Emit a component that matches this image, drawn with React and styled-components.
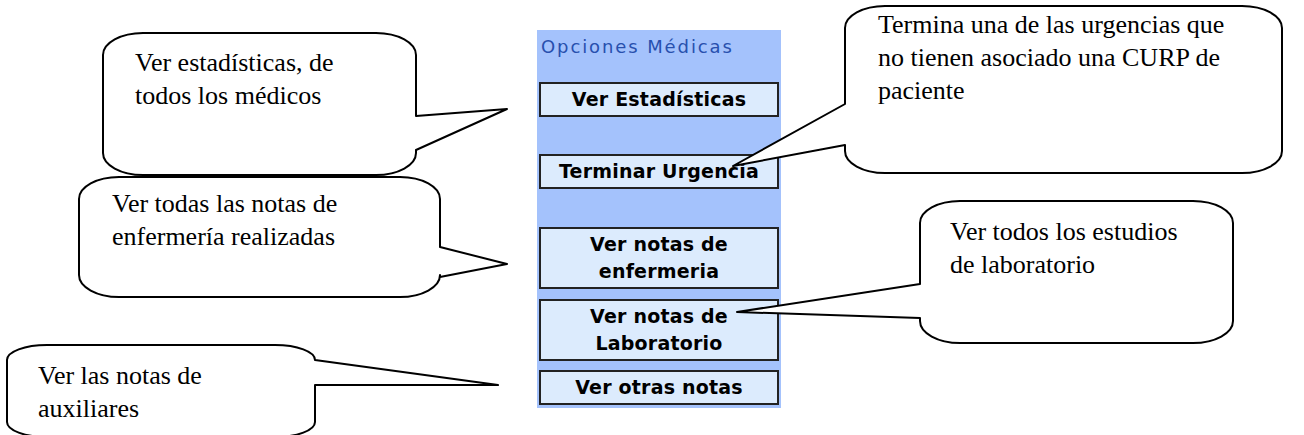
import React from 'react';
import styled, { createGlobalStyle } from 'styled-components';

const GlobalStyle = createGlobalStyle`
  html, body {
    margin: 0;
    padding: 0;
    background: #ffffff;
  }
`;

// Word-style rounded callout with a wedge tail on the left or right side
const calloutPath = ({ w, h, rx, ry, tail }) => {
  const { side, a, b, px, py } = tail;
  const arc = (x, y) => `A ${rx} ${ry} 0 0 1 ${x} ${y}`;
  if (side === 'right') {
    return [
      `M ${rx} 0`, `H ${w - rx}`, arc(w, ry),
      `V ${a}`, `L ${px} ${py}`, `L ${w} ${b}`,
      `V ${h - ry}`, arc(w - rx, h),
      `H ${rx}`, arc(0, h - ry),
      `V ${ry}`, arc(rx, 0), 'Z',
    ].join(' ');
  }
  return [
    `M ${rx} 0`, `H ${w - rx}`, arc(w, ry),
    `V ${h - ry}`, arc(w - rx, h),
    `H ${rx}`, arc(0, h - ry),
    `V ${b}`, `L ${px} ${py}`, `L 0 ${a}`,
    `V ${ry}`, arc(rx, 0), 'Z',
  ].join(' ');
};

const Callout = ({ x, y, w, h, rx = 40, ry = 22, tail, textX, textY, lines }) => (
  <Bubble $x={x} $y={y} $w={w} $h={h}>
    <BubbleShape width={w} height={h}>
      <path
        d={calloutPath({ w, h, rx, ry, tail })}
        fill="#ffffff"
        stroke="#000000"
        strokeWidth="2"
        strokeLinejoin="round"
      />
    </BubbleShape>
    <BubbleText $pl={textX - x} $pt={textY - y}>
      {lines.map((l) => (
        <div key={l}>{l}</div>
      ))}
    </BubbleText>
  </Bubble>
);

const buttons = [
  { label: ['Ver Estadísticas'], gap: 0 },
  { label: ['Terminar Urgencia'], gap: 37 },
  { label: ['Ver notas de', 'enfermeria'], gap: 38 },
  { label: ['Ver notas de', 'Laboratorio'], gap: 10 },
  { label: ['Ver otras notas'], gap: 9 },
];

const callouts = [
  {
    x: 103, y: 33, w: 313, h: 142,
    tail: { side: 'right', a: 83, b: 117, px: 404, py: 76 },
    textX: 135, textY: 46,
    lines: ['Ver estadísticas, de', 'todos los médicos'],
  },
  {
    x: 79, y: 177, w: 361, h: 120,
    tail: { side: 'right', a: 70, b: 100, px: 428, py: 87 },
    textX: 112, textY: 187,
    lines: ['Ver todas las notas de', 'enfermería realizadas'],
  },
  {
    x: 7, y: 345, w: 308, h: 92, ry: 15,
    tail: { side: 'right', a: 15, b: 40, px: 491, py: 40 },
    textX: 38, textY: 359,
    lines: ['Ver las notas de', 'auxiliares'],
  },
  {
    x: 845, y: 6, w: 437, h: 167,
    tail: { side: 'left', a: 98, b: 139, px: -112, py: 160 },
    textX: 878, textY: 8,
    lines: ['Termina una de las urgencias que', 'no tienen asociado una CURP de', 'paciente'],
  },
  {
    x: 920, y: 201, w: 313, h: 142,
    tail: { side: 'left', a: 83, b: 117, px: -183, py: 111 },
    textX: 950, textY: 215,
    lines: ['Ver todos los estudios', 'de laboratorio'],
  },
];

const App = () => (
  <>
    <GlobalStyle />
    <Canvas>
      <Panel>
        <PanelTitle>Opciones Médicas</PanelTitle>
        {buttons.map((b) => (
          <MenuButton key={b.label.join(' ')} $gap={b.gap}>
            {b.label.map((l) => (
              <span key={l}>{l}</span>
            ))}
          </MenuButton>
        ))}
      </Panel>
      {callouts.map((c) => (
        <Callout key={c.lines[0]} {...c} />
      ))}
    </Canvas>
  </>
);

const Canvas = styled.div`
  position: relative;
  width: 1304px;
  height: 435px;
  overflow: hidden;
  background: #ffffff;
  padding-top: 30px;
  box-sizing: border-box;
`;

const Panel = styled.div`
  margin-left: 537px;
  width: 244px;
  box-sizing: border-box;
  padding: 0 2px 3px;
  background: #a4c2fc;
  display: flex;
  flex-direction: column;
`;

const PanelTitle = styled.div`
  height: 52px;
  box-sizing: border-box;
  padding: 6px 0 0 2px;
  font-family: 'DejaVu Sans', Verdana, sans-serif;
  font-size: 18px;
  line-height: 21px;
  letter-spacing: 1.9px;
  color: #2850ae;
`;

const MenuButton = styled.div`
  margin-top: ${({ $gap }) => $gap}px;
  display: flex;
  flex-direction: column;
  align-items: center;
  padding: 2px 0;
  border: 2px solid #222222;
  background: #dcebfd;
  font-family: 'DejaVu Sans', Verdana, sans-serif;
  font-weight: bold;
  font-size: 19px;
  line-height: 27px;
  letter-spacing: 0.2px;
  color: #000000;
`;

const Bubble = styled.div`
  position: absolute;
  left: ${({ $x }) => $x}px;
  top: ${({ $y }) => $y}px;
  width: ${({ $w }) => $w}px;
  height: ${({ $h }) => $h}px;
`;

const BubbleShape = styled.svg`
  position: absolute;
  left: 0;
  top: 0;
  overflow: visible;
`;

const BubbleText = styled.div`
  position: relative;
  padding: ${({ $pt }) => $pt}px 0 0 ${({ $pl }) => $pl}px;
  font-family: 'Liberation Serif', 'Times New Roman', serif;
  font-size: 26px;
  line-height: 33px;
  color: #000000;
  white-space: nowrap;
`;

export default App;
